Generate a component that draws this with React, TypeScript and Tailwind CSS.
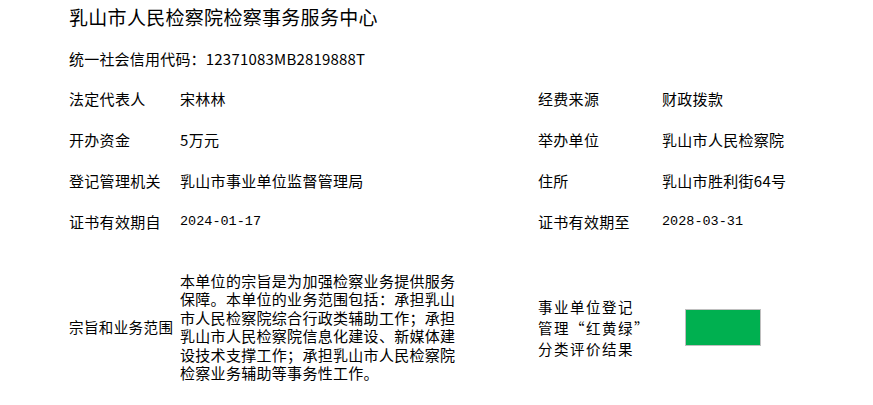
const cjk = "font-['Noto_Sans_CJK_SC','Microsoft_YaHei',sans-serif]";
const mono = "font-['Liberation_Mono','Noto_Sans_CJK_SC',monospace]";

type Field = { label: string; value: string; mono?: boolean };

const rows: [Field, Field][] = [
  [
    { label: "法定代表人", value: "宋林林" },
    { label: "经费来源", value: "财政拨款" },
  ],
  [
    { label: "开办资金", value: "5万元" },
    { label: "举办单位", value: "乳山市人民检察院" },
  ],
  [
    { label: "登记管理机关", value: "乳山市事业单位监督管理局" },
    { label: "住所", value: "乳山市胜利街64号" },
  ],
  [
    { label: "证书有效期自", value: "2024-01-17", mono: true },
    { label: "证书有效期至", value: "2028-03-31", mono: true },
  ],
];

const ratingLines = ["事业单位登记", "管理“红黄绿”", "分类评价结果"];

function Value({ field }: { field: Field }) {
  if (field.mono) {
    return <span className={`${mono} text-[13.5px]`}>{field.value}</span>;
  }
  return <span className="tracking-[0.3px]">{field.value}</span>;
}

export default function App() {
  return (
    <div className={`${cjk} bg-white text-black w-[873px] h-[405px] overflow-hidden pl-[69px]`}>
      <h1 className="text-[19px] leading-[24px] pt-[5px] tracking-[0.3px]">
        乳山市人民检察院检察事务服务中心
      </h1>

      <div className="mt-[20px] text-[15px] leading-[20px] tracking-[0.2px]">
        统一社会信用代码：12371083MB2819888T
      </div>

      <div className="mt-[10px] grid grid-cols-[111px_358px_124px_1fr] text-[15px]">
        {rows.map(([left, right]) => (
          <div key={left.label} className="contents">
            <div className="h-[41px] flex items-center tracking-[0.3px]">{left.label}</div>
            <div className="h-[41px] flex items-center">
              <Value field={left} />
            </div>
            <div className="h-[41px] flex items-center tracking-[0.3px]">{right.label}</div>
            <div className="h-[41px] flex items-center">
              <Value field={right} />
            </div>
          </div>
        ))}

        {/* 宗旨和业务范围 */}
        <div className="pt-[29px] flex items-center">
          <span className="text-[14.5px] tracking-[0.4px] whitespace-nowrap">宗旨和业务范围</span>
        </div>
        <div className="pt-[29px]">
          <p className="w-[280px] leading-[18.4px] tracking-[0.3px]">
            本单位的宗旨是为加强检察业务提供服务保障。本单位的业务范围包括：承担乳山市人民检察院综合行政类辅助工作；承担乳山市人民检察院信息化建设、新媒体建设技术支撑工作；承担乳山市人民检察院检察业务辅助等事务性工作。
          </p>
        </div>
        <div className="pt-[29px] flex flex-col justify-center">
          {ratingLines.map((line) => (
            <div key={line} className="h-[21px] text-[14.5px] leading-[21px] tracking-[1.5px] whitespace-nowrap">
              {line}
            </div>
          ))}
        </div>
        <div className="pt-[29px] flex items-center">
          <div className="ml-[23px] w-[76px] h-[37px] bg-[#00b050] border border-[#bfbfbf]" />
        </div>
      </div>
    </div>
  );
}
